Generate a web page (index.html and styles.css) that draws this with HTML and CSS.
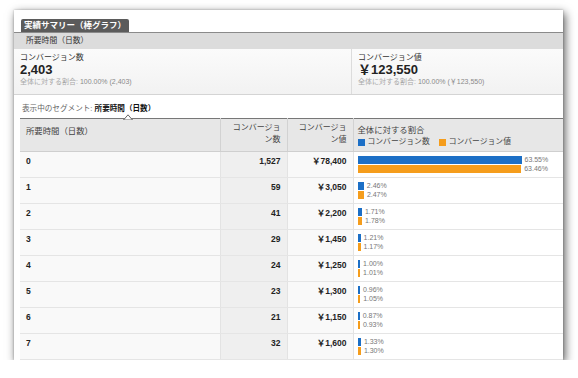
FILE: index.html
```html
<!DOCTYPE html>
<html lang="ja">
<head>
<meta charset="utf-8">
<link rel="stylesheet" href="styles.css">
</head>
<body>
<div class="card">
  <div class="tabrow"><span class="tab">実績サマリー（棒グラフ）</span></div>
  <div class="crumb">所要時間（日数）</div>
  <div class="summary">
    <div class="metric first">
      <div class="m-label">コンバージョン数</div>
      <div class="m-value">2,403</div>
      <div class="m-sub">全体に対する割合: <span class="m-pct">100.00% (2,403)</span></div>
    </div>
    <div class="metric">
      <div class="m-label">コンバージョン値</div>
      <div class="m-value">￥123,550</div>
      <div class="m-sub">全体に対する割合: <span class="m-pct">100.00% (￥123,550)</span></div>
    </div>
  </div>
  <div class="segment">表示中のセグメント: <span class="seg-name">所要時間（日数）<svg class="caret" width="10" height="6" viewBox="0 0 10 6"><polygon points="0.5,6 5,0.8 9.5,6" fill="#fff" stroke="#666" stroke-width="1"/></svg></span></div>
  <table class="grid">
    <colgroup><col class="c1"><col class="c2"><col class="c3"><col class="c4"></colgroup>
    <thead>
      <tr>
        <th class="h1">所要時間（日数）</th>
        <th class="num">コンバージョ<br>ン数</th>
        <th class="num">コンバージョ<br>ン値</th>
        <th class="h4">全体に対する割合
          <div class="legend"><span class="sw blue"></span>コンバージョン数<span class="sw orange"></span>コンバージョン値</div>
        </th>
      </tr>
    </thead>
    <tbody>
      <tr><td>0</td><td class="num sorted">1,527</td><td class="num">￥78,400</td><td class="bars"><div class="bl"><span class="bar blue" style="width:164px"></span><span class="pct">63.55%</span></div><div class="bl"><span class="bar orange" style="width:163.7px"></span><span class="pct">63.46%</span></div></td></tr>
      <tr><td>1</td><td class="num sorted">59</td><td class="num">￥3,050</td><td class="bars"><div class="bl"><span class="bar blue" style="width:6.3px"></span><span class="pct">2.46%</span></div><div class="bl"><span class="bar orange" style="width:6.4px"></span><span class="pct">2.47%</span></div></td></tr>
      <tr><td>2</td><td class="num sorted">41</td><td class="num">￥2,200</td><td class="bars"><div class="bl"><span class="bar blue" style="width:4.4px"></span><span class="pct">1.71%</span></div><div class="bl"><span class="bar orange" style="width:4.6px"></span><span class="pct">1.78%</span></div></td></tr>
      <tr><td>3</td><td class="num sorted">29</td><td class="num">￥1,450</td><td class="bars"><div class="bl"><span class="bar blue" style="width:3.1px"></span><span class="pct">1.21%</span></div><div class="bl"><span class="bar orange" style="width:3px"></span><span class="pct">1.17%</span></div></td></tr>
      <tr><td>4</td><td class="num sorted">24</td><td class="num">￥1,250</td><td class="bars"><div class="bl"><span class="bar blue" style="width:2.6px"></span><span class="pct">1.00%</span></div><div class="bl"><span class="bar orange" style="width:2.6px"></span><span class="pct">1.01%</span></div></td></tr>
      <tr><td>5</td><td class="num sorted">23</td><td class="num">￥1,300</td><td class="bars"><div class="bl"><span class="bar blue" style="width:2.5px"></span><span class="pct">0.96%</span></div><div class="bl"><span class="bar orange" style="width:2.7px"></span><span class="pct">1.05%</span></div></td></tr>
      <tr><td>6</td><td class="num sorted">21</td><td class="num">￥1,150</td><td class="bars"><div class="bl"><span class="bar blue" style="width:2.2px"></span><span class="pct">0.87%</span></div><div class="bl"><span class="bar orange" style="width:2.4px"></span><span class="pct">0.93%</span></div></td></tr>
      <tr><td>7</td><td class="num sorted">32</td><td class="num">￥1,600</td><td class="bars"><div class="bl"><span class="bar blue" style="width:3.4px"></span><span class="pct">1.33%</span></div><div class="bl"><span class="bar orange" style="width:3.4px"></span><span class="pct">1.30%</span></div></td></tr>
    </tbody>
  </table>
</div>
</body>
</html>
```
FILE: styles.css
```css
html, body { margin: 0; padding: 0; background: #fff; }
body {
  font-family: "Liberation Sans", "Noto Sans CJK JP", sans-serif;
  color: #222;
}
.card {
  width: 549px;
  height: 350px;
  margin: 10px 0 0 14px;
  background: #fff;
  overflow: hidden;
  box-shadow: 2px 3px 9px rgba(0,0,0,0.65), 0 0 2px rgba(0,0,0,0.25);
}
.tabrow { padding: 9px 0 0 7px; height: 13px; line-height: 0; }
.tab {
  display: inline-block;
  height: 13px;
  line-height: 13px;
  padding: 0 3px 0 3px;
  background: #5b5b5b;
  color: #fff;
  font-size: 8.5px;
  font-weight: bold;
  border-radius: 2px 2px 0 0;
}
.crumb {
  border-top: 1px solid #8a8a8a;
  background: #dcdcdc;
  height: 16px;
  line-height: 16px;
  padding-left: 12px;
  font-size: 7.8px;
  color: #333;
}
.summary {
  display: flex;
  height: 45px;
  border-bottom: 1px solid #d4d4d4;
  background: linear-gradient(#fbfbfb, #f2f2f2);
}
.metric { flex: 1; padding: 4px 6px 0; }
.metric.first { flex: 0 0 338px; box-sizing: border-box; border-right: 1px solid #dcdcdc; }
.m-label { font-size: 8px; line-height: 10px; color: #333; }
.m-value { font-size: 13px; line-height: 14px; font-weight: bold; color: #222; }
.m-sub { font-size: 7px; line-height: 10px; color: #a8a8a8; margin-top: 0; }
.m-pct { color: #8a8a8a; }
.segment {
  padding: 9px 0 5px 8px;
  font-size: 7.6px;
  line-height: 9px;
  color: #666;
}
.seg-name { position: relative; color: #111; font-weight: bold; }
.caret { position: absolute; left: 28px; top: 10px; display: block; }
.grid {
  margin-left: 6px;
  width: 543px;
  table-layout: fixed;
  border-collapse: collapse;
  border-top: 1px solid #777;
}
.c1 { width: 200px; }
.c2 { width: 67px; }
.c3 { width: 66px; }
.c4 { width: 210px; }
th {
  background: #e7e7e7;
  height: 33px;
  box-sizing: border-box;
  font-size: 8px;
  line-height: 12px;
  font-weight: normal;
  color: #444;
  vertical-align: top;
  text-align: left;
  padding: 3px 6px 0;
  border-left: 1px solid #d2d2d2;
  border-bottom: 1px solid #cfcfcf;
}
th:first-child { border-left: none; }
th.h1 { padding-top: 6px; font-size: 8.4px; }
th.num { text-align: right; padding-right: 6px; }
th.h4 { padding: 5px 4px 0; font-size: 8.4px; }
.legend { display: flex; align-items: center; margin-top: 0; font-size: 7.8px; }
.sw { display: inline-block; width: 7px; height: 7px; margin-right: 3px; }
.sw.orange { margin-left: 9px; }
td {
  height: 26px;
  box-sizing: border-box;
  vertical-align: top;
  padding: 4px 6px 0;
  font-size: 8.5px;
  line-height: 11px;
  font-weight: bold;
  color: #222;
  background: #f9f9f9;
  border-bottom: 1px solid #e5e5e5;
  border-left: 1px solid #e3e3e3;
}
td:first-child { border-left: none; }
td.num { text-align: right; padding-right: 6px; }
td.sorted { background: #efefef; }
td.bars { background: #fff; padding: 4px 4px 0; font-weight: normal; }
.bl { display: flex; align-items: center; height: 8px; margin-bottom: 1px; }
.bar { display: block; height: 8px; flex: none; }
.pct { font-size: 7px; line-height: 8px; color: #777; margin-left: 3px; }
.blue { background: #1c6fc6; }
.orange { background: #f59d1c; }
```
